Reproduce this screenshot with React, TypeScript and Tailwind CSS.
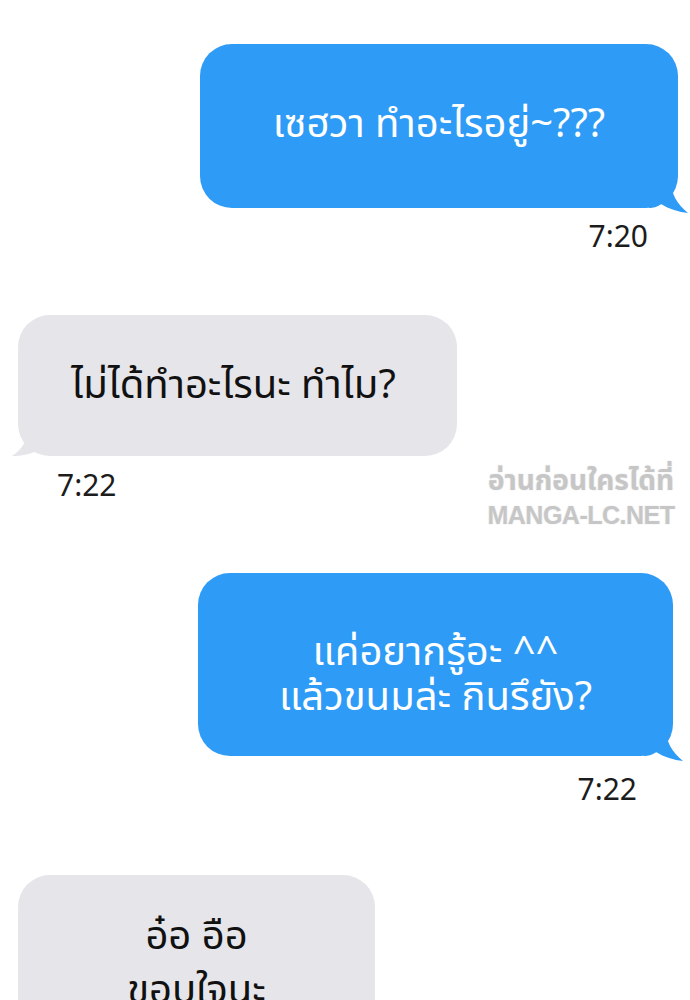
import React from "react";

const FONT = { fontFamily: '"Noto Sans Thai", "Noto Sans", "DejaVu Sans", sans-serif' };

function BlueTail() {
  return (
    <svg
      className="absolute bottom-[-6px] right-[-11px]"
      width="40"
      height="34"
      viewBox="0 0 40 34"
    >
      <path d="M0 0 L22 0 C22 14 28 24 39 33 C30 32 20 29 12 24 C8 27 4 28 0 28 Z" fill="#2e9bf6" />
    </svg>
  );
}

function GrayTail() {
  return (
    <svg
      className="absolute bottom-[-2px] left-[-7px]"
      width="40"
      height="34"
      viewBox="0 0 40 34"
    >
      <path d="M40 0 L18 0 C18 14 12 25 1 32 C10 32 20 30 28 26 C32 28 36 29 40 29 Z" fill="#e5e5ea" />
    </svg>
  );
}

export default function App() {
  return (
    <div className="relative h-[1000px] w-[690px] overflow-hidden bg-white" style={FONT}>
      {/* first sent */}
      <div className="flex justify-end pr-[12px] pt-[44px]">
        <div className="relative flex h-[164px] w-[478px] items-center justify-center rounded-[32px] bg-[#2e9bf6] pb-[2px]">
          <span className="relative z-10 whitespace-nowrap text-[40px] text-white">เซฮวา ทำอะไรอยู่~???</span>
          <BlueTail />
        </div>
      </div>
      <div className="mt-[13px] pr-[42px] text-right text-[30px] leading-[34px] text-[#1c1c1c]">7:20</div>

      {/* first received */}
      <div className="mt-[60px] pl-[18px]">
        <div className="relative flex h-[141px] w-[439px] items-center justify-center rounded-[32px] bg-[#e5e5ea] pr-[8px]">
          <span className="relative z-10 whitespace-nowrap text-[40px] text-[#111]">ไม่ได้ทำอะไรนะ ทำไม?</span>
          <GrayTail />
        </div>
      </div>
      <div className="mt-[14px] pl-[57px] text-[30px] leading-[34px] text-[#1c1c1c]">7:22</div>

      {/* second sent */}
      <div className="mt-[69px] flex justify-end pr-[17px]">
        <div className="relative flex h-[183px] w-[475px] flex-col items-center justify-center rounded-[32px] bg-[#2e9bf6] pt-[22px] text-[40px] leading-[45px] text-white">
          <span className="relative z-10 whitespace-nowrap">แค่อยากรู้อะ ^^</span>
          <span className="relative z-10 whitespace-nowrap">แล้วขนมล่ะ กินรึยัง?</span>
          <BlueTail />
        </div>
      </div>
      <div className="mt-[18px] pr-[53px] text-right text-[30px] leading-[34px] text-[#1c1c1c]">7:22</div>

      {/* second received */}
      <div className="mt-[67px] pl-[18px]">
        <div className="flex h-[180px] w-[357px] flex-col items-center rounded-[32px] bg-[#e5e5ea] pt-[35px] text-[40px] leading-[54px] text-[#111]">
          <span className="whitespace-nowrap">อ๋อ อือ</span>
          <span className="whitespace-nowrap">ขอบใจนะ</span>
        </div>
      </div>

      {/* watermark */}
      <div
        className="absolute left-[476px] top-[464px] flex w-[210px] flex-col items-center text-[#c6c6c6]"
        style={{ textShadow: "0 0 2px #fff, 0 0 2px #fff, 0 0 1px #999" }}
      >
        <span className="whitespace-nowrap text-[28px] font-bold leading-[36px]">อ่านก่อนใครได้ที่</span>
        <span
          className="whitespace-nowrap text-[25px] font-bold leading-[30px] tracking-[-0.5px]"
          style={{ fontFamily: '"Liberation Sans", sans-serif' }}
        >
          MANGA-LC.NET
        </span>
      </div>
    </div>
  );
}
